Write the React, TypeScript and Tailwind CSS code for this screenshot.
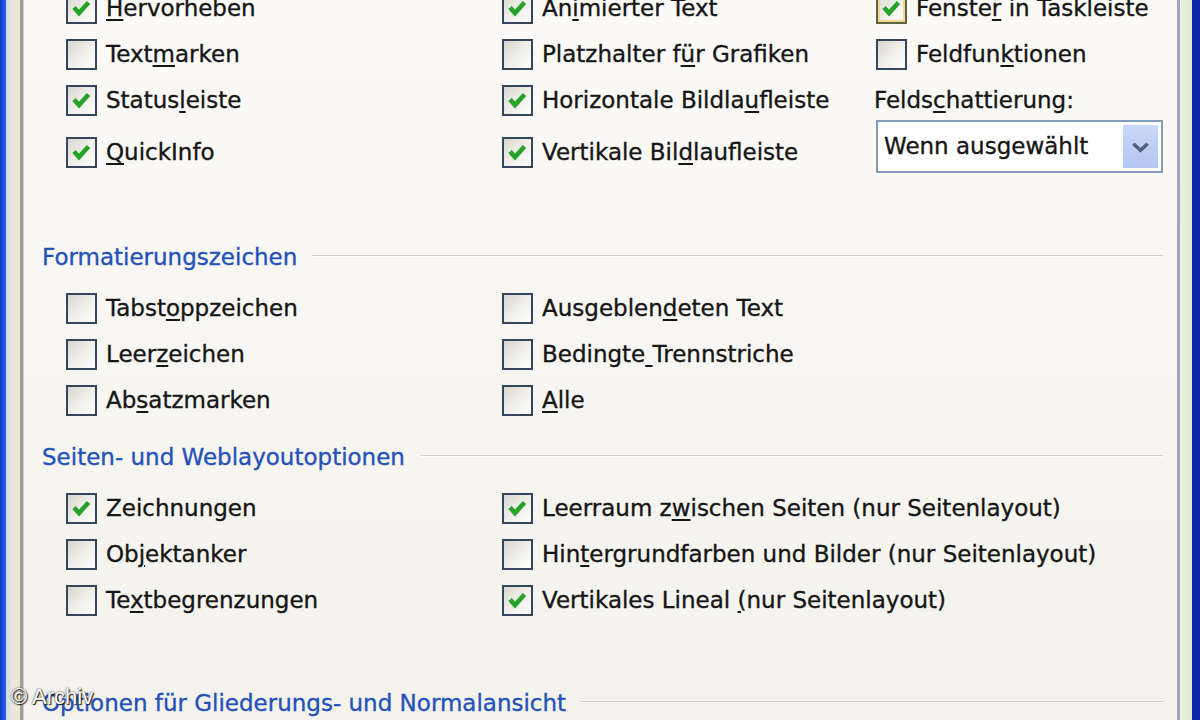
type Item = { label: string; k?: number; checked?: boolean; hover?: boolean };

const TOP_COL1: Item[] = [
  { label: "Hervorheben", k: 0, checked: true },
  { label: "Textmarken", k: 4 },
  { label: "Statusleiste", k: 6, checked: true },
  { label: "QuickInfo", k: 0, checked: true },
];

const TOP_COL2: Item[] = [
  { label: "Animierter Text", k: 2, checked: true },
  { label: "Platzhalter für Grafiken", k: 13 },
  { label: "Horizontale Bildlaufleiste", k: 18, checked: true },
  { label: "Vertikale Bildlaufleiste", k: 13, checked: true },
];

const FORMAT_ROWS: [Item, Item][] = [
  [{ label: "Tabstoppzeichen", k: 5 }, { label: "Ausgeblendeten Text", k: 9 }],
  [{ label: "Leerzeichen", k: 4 }, { label: "Bedingte Trennstriche", k: 8 }],
  [{ label: "Absatzmarken", k: 2 }, { label: "Alle", k: 0 }],
];

const LAYOUT_ROWS: [Item, Item][] = [
  [
    { label: "Zeichnungen", checked: true },
    { label: "Leerraum zwischen Seiten (nur Seitenlayout)", k: 10, checked: true },
  ],
  [{ label: "Objektanker", k: 2 }, { label: "Hintergrundfarben und Bilder (nur Seitenlayout)", k: 3 }],
  [
    { label: "Textbegrenzungen", k: 2 },
    { label: "Vertikales Lineal (nur Seitenlayout)", k: 18, checked: true },
  ],
];

function Label({ text, k }: { text: string; k?: number }) {
  if (k === undefined) return <span className="whitespace-pre">{text}</span>;
  return (
    <span className="whitespace-pre">
      {text.slice(0, k)}
      <span className="underline decoration-[2px] underline-offset-[3px]">{text[k]}</span>
      {text.slice(k + 1)}
    </span>
  );
}

function Box({ checked, hover }: { checked?: boolean; hover?: boolean }) {
  return (
    <span
      className={`relative flex h-[31px] w-[31px] shrink-0 items-center justify-center border-[2px] bg-gradient-to-br from-[#d8d7cf] via-[#efeee8] to-white ${
        hover ? "border-[#5e6440]" : "border-[#34465c]"
      }`}
    >
      {hover ? <span className="absolute inset-0 border-[2px] border-[#efd893]" /> : null}
      {checked ? (
        <svg viewBox="0 0 27 27" className="relative h-[27px] w-[27px]">
          <polyline
            points="6,12.5 11,18 20.5,7.5"
            fill="none"
            stroke="#25a229"
            strokeWidth="4.6"
            strokeLinejoin="miter"
          />
        </svg>
      ) : null}
    </span>
  );
}

function Check({ item }: { item: Item }) {
  return (
    <div className="flex h-[46px] items-center gap-[9px]">
      <Box checked={item.checked} hover={item.hover} />
      <Label text={item.label} k={item.k} />
    </div>
  );
}

function GroupHeader({ title }: { title: string }) {
  return (
    <div className="flex h-[46px] items-center gap-[15px]">
      <span className="whitespace-nowrap text-[#2452b8] [-webkit-text-stroke:0.35px_#2452b8]">{title}</span>
      <span className="mb-[3px] h-[2px] flex-1 border-t border-[#d0cfc3] border-b border-b-white" />
    </div>
  );
}

function CheckRows({ rows }: { rows: [Item, Item][] }) {
  return (
    <div className="grid grid-cols-[436px_1fr] pl-[24px]">
      {rows.map(([a, b]) => (
        <div key={a.label} className="contents">
          <Check item={a} />
          <Check item={b} />
        </div>
      ))}
    </div>
  );
}

export default function App() {
  return (
    <div className="relative flex h-[720px] w-[1200px] overflow-hidden font-['DejaVu_Sans',sans-serif] text-[23px] leading-none text-[#161616] [-webkit-text-stroke:0.35px_#161616]">
      <div className="w-[6px] bg-gradient-to-r from-[#0c3bcb] to-[#2f5fe2]" />
      <div className="w-[14px] bg-gradient-to-r from-[#cbd8ef] via-[#ece9d8] to-[#ebe8d6]" />
      <div className="w-[4px] border-r border-[#cfcfca] bg-[#9d9d9b]" />

      <main className="flex-1 bg-gradient-to-b from-[#fbfaf7] to-[#f4f2ec] pl-[18px] pr-[14px]">
        <div className="-mt-[15px] grid grid-cols-[436px_374px_1fr] pl-[24px]">
          <div className="flex flex-col">
            {TOP_COL1.map((it, i) => (
              <div key={it.label} className={i === 3 ? "mt-[6px]" : ""}>
                <Check item={it} />
              </div>
            ))}
          </div>
          <div className="flex flex-col">
            {TOP_COL2.map((it, i) => (
              <div key={it.label} className={i === 3 ? "mt-[6px]" : ""}>
                <Check item={it} />
              </div>
            ))}
          </div>
          <div className="flex flex-col">
            <Check item={{ label: "Fenster in Taskleiste", k: 6, checked: true, hover: true }} />
            <Check item={{ label: "Feldfunktionen", k: 7 }} />
            <div className="-ml-[2px] flex h-[46px] items-center">
              <Label text="Feldschattierung:" k={5} />
            </div>
            <div className="-mt-[3px] flex h-[53px] w-[287px] items-center border-[2px] border-[#7f9db9] bg-white pl-[6px] pr-[3px]">
              <span className="flex-1">Wenn ausgewählt</span>
              <span className="flex h-[43px] w-[35px] items-center justify-center bg-gradient-to-b from-[#cad8f9] to-[#b3c7f1]">
                <svg viewBox="0 0 20 12" className="h-[12px] w-[19px]">
                  <polyline points="2.5,2.5 10,9.5 17.5,2.5" fill="none" stroke="#4d6185" strokeWidth="3.6" />
                </svg>
              </span>
            </div>
          </div>
        </div>

        <div className="mt-[59px]">
          <GroupHeader title="Formatierungszeichen" />
        </div>
        <div className="mt-[5px]">
          <CheckRows rows={FORMAT_ROWS} />
        </div>

        <div className="mt-[11px]">
          <GroupHeader title="Seiten- und Weblayoutoptionen" />
        </div>
        <div className="mt-[5px]">
          <CheckRows rows={LAYOUT_ROWS} />
        </div>

        <div className="mt-[57px]">
          <GroupHeader title="Optionen für Gliederungs- und Normalansicht" />
        </div>
      </main>

      <div className="w-[3px] bg-[#a2a5b9]" />
      <div className="w-[12px] bg-gradient-to-r from-[#eef0e2] to-[#e2e8d4]" />
      <div className="w-[8px] bg-[#0a28a3]" />

      <span className="absolute left-[11px] top-[686px] font-['Liberation_Sans',sans-serif] text-[22px] text-white [-webkit-text-stroke:0px] [text-shadow:0_0_2px_#222,1px_1px_1px_#111]">
        © Archiv
      </span>
    </div>
  );
}
